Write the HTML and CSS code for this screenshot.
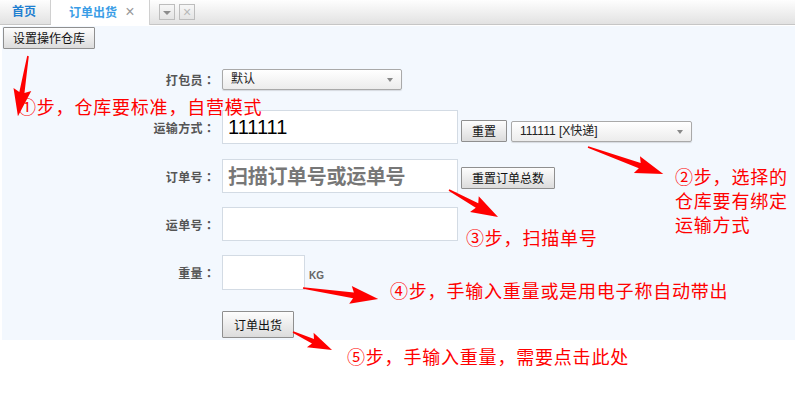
FILE: index.html
```html
<!DOCTYPE html>
<html lang="zh-CN">
<head>
    <meta charset="UTF-8">
    <title>订单出货</title>
    <link rel="stylesheet" href="styles.css">
</head>
<body>

    <!-- вкладки -->
    <div class="tabs">
        <div class="tab">首页</div>
        <div class="tab active">订单出货 <span class="tab-close">×</span></div>
        <div class="tab-tools">
            <span class="tool-btn"><span class="tool-arrow"></span></span>
            <span class="tool-btn tool-x">×</span>
        </div>
    </div>

    <div class="panel">
        <button class="btn">设置操作仓库</button>

        <div class="form">
            <div class="form-row row-pack">
                <label class="form-label">打包员<span class="colon" lang="zh-TW">：</span></label>
                <div class="select select-pack">默认<span class="select-arrow"></span></div>
            </div>

            <div class="form-row row-ship">
                <label class="form-label">运输方式<span class="colon" lang="zh-TW">：</span></label>
                <div class="input input-big">111111</div>
                <div class="row-extra">
                    <button class="btn">重置</button>
                    <div class="select select-ship">111111 [X快递]<span class="select-arrow"></span></div>
                </div>
            </div>

            <div class="form-row row-order">
                <label class="form-label">订单号<span class="colon" lang="zh-TW">：</span></label>
                <div class="input input-big placeholder">扫描订单号或运单号</div>
                <div class="row-extra extra-order">
                    <button class="btn">重置订单总数</button>
                </div>
            </div>

            <div class="form-row">
                <label class="form-label">运单号<span class="colon" lang="zh-TW">：</span></label>
                <div class="input input-big"></div>
            </div>

            <div class="form-row">
                <label class="form-label">重量<span class="colon" lang="zh-TW">：</span></label>
                <div class="input input-weight"></div>
                <span class="unit">KG</span>
            </div>

            <div class="form-row row-submit">
                <span class="form-label"></span>
                <button class="btn btn-submit">订单出货</button>
            </div>
        </div>
    </div>

    <!-- пометки поверх -->
    <svg class="arrows" width="795" height="399" viewBox="0 0 795 399">
        <g fill="#ff0000">
            <g transform="translate(28,56) rotate(99.5)">
                <polygon points="0,-0.8 37,-2.6 34,-9 61,0 34,9 37,2.6 0,0.8"/>
            </g>
            <g transform="translate(588,147) rotate(19.8)">
                <polygon points="0,-0.8 55,-2.8 52,-9 80,0 52,9 55,2.8 0,0.8"/>
            </g>
            <g transform="translate(449,190) rotate(28.9)">
                <polygon points="0,-0.8 32,-2.6 29,-9 56,0 29,9 32,2.6 0,0.8"/>
            </g>
            <g transform="translate(303,288) rotate(8.3)">
                <polygon points="0,-0.8 51,-2.8 48,-9 76,0 48,9 51,2.8 0,0.8"/>
            </g>
            <g transform="translate(293,332) rotate(24.8)">
                <polygon points="0,-0.8 22,-2.4 19,-8 43,0 19,8 22,2.4 0,0.8"/>
            </g>
        </g>
    </svg>

    <div class="note note-1">①步，仓库要标准，自营模式</div>
    <div class="note note-2">②步，选择的<br>仓库要有绑定<br>运输方式</div>
    <div class="note note-3">③步，扫描单号</div>
    <div class="note note-4">④步，手输入重量或是用电子称自动带出</div>
    <div class="note note-5">⑤步，手输入重量，需要点击此处</div>

</body>
</html>
```

FILE: styles.css
```css
/* сброс */
* {
    margin: 0;
    padding: 0;
    box-sizing: border-box;
}

body {
    font-family: "Liberation Sans", "Noto Sans CJK SC", sans-serif;
    font-size: 12px;
    color: #222;
    background: #fff;
    width: 795px;
    height: 399px;
    overflow: hidden;
    position: relative;
}

/* вкладки */
.tabs {
    display: flex;
    align-items: flex-start;
    height: 25px;
    border-bottom: 1px solid #c6c6c6;
    background: linear-gradient(#fefefe, #e2e2e2);
}

.tab {
    height: 24px;
    line-height: 24px;
    width: 51px;
    padding-left: 12px;
    border-right: 1px solid #d0d0d0;
    color: #1f7fd0;
    font-weight: bold;
}

.tab.active {
    width: 99px;
    height: 25px;
    padding-left: 18px;
    background: #fff;
    color: #3a9de6;
}

.tab-close {
    margin-left: 5px;
    color: #999;
    font-weight: normal;
    font-size: 16px;
}

.tab-tools {
    display: flex;
    gap: 4px;
    margin: 4px 0 0 9px;
}

.tool-btn {
    width: 16px;
    height: 16px;
    border: 1px solid #bdbdbd;
    background: linear-gradient(#f7f7f7, #e4e4e4);
    display: flex;
    align-items: center;
    justify-content: center;
}

.tool-arrow {
    width: 0;
    height: 0;
    border-left: 4px solid transparent;
    border-right: 4px solid transparent;
    border-top: 4px solid #8c8c8c;
    margin-top: 2px;
}

.tool-x {
    color: #b8b8b8;
    font-size: 14px;
    line-height: 14px;
}

/* панель */
.panel {
    margin: 1px 0 0 2px;
    padding: 1px 0 3px 1px;
    background: #f3f8fe;
    height: 314px;
}

.btn {
    font-family: "Noto Sans CJK SC", sans-serif;
    font-size: 12px;
    color: #111;
    height: 22px;
    padding: 0 9px;
    line-height: 20px;
    border: 1px solid #8f8f8f;
    border-radius: 1px;
    background: linear-gradient(#fdfdfd, #dcdcdc);
}

/* форма */
.form {
    display: flex;
    flex-direction: column;
}

.form-row {
    display: flex;
    align-items: center;
    margin-top: 14px;
}

.row-pack {
    margin-top: 20px;
}

.row-ship {
    margin-top: 20px;
}

.row-order {
    margin-top: 15px;
}

.row-submit {
    margin-top: 21px;
}

.form-label {
    width: 212px;
    margin-right: 7px;
    text-align: right;
    font-family: "Noto Sans CJK SC", sans-serif;
    font-weight: bold;
    font-size: 12px;
    letter-spacing: 0.4px;
    color: #555;
}

/* двоеточие по центру ячейки, как в оригинале */
.colon {
    font-family: "Noto Sans CJK TC", sans-serif;
    letter-spacing: 0;
}

.select {
    position: relative;
    height: 21px;
    line-height: 19px;
    padding-left: 8px;
    border: 1px solid #a9a9a9;
    border-radius: 2px;
    background: linear-gradient(#fff, #ececec);
    box-shadow: 0 1px 1px rgba(0, 0, 0, 0.12);
    font-family: "Liberation Sans", "Noto Sans CJK SC", sans-serif;
    color: #222;
}

.select-pack {
    width: 180px;
}

.select-ship {
    width: 181px;
    margin-left: 4px;
    margin-top: 1px;
}

.select-arrow {
    position: absolute;
    right: 8px;
    top: 8px;
    border-left: 3px solid transparent;
    border-right: 3px solid transparent;
    border-top: 4px solid #888;
}

.input {
    width: 236px;
    height: 34px;
    border: 1px solid #d3dbe4;
    background: #fff;
}

.input-big {
    padding-left: 5px;
    line-height: 32px;
    font-size: 20px;
    color: #000;
}

.placeholder {
    font-family: "Noto Sans CJK SC", sans-serif;
    font-weight: bold;
    color: #777;
    letter-spacing: -0.3px;
}

.input-weight {
    width: 83px;
    height: 35px;
}

.row-extra {
    display: flex;
    align-self: flex-start;
    margin: 10px 0 0 3px;
}

.row-extra .btn {
    padding: 0 10px;
}

.extra-order {
    margin-top: 8px;
}

.unit {
    align-self: flex-end;
    margin: 0 0 9px 4px;
    font-size: 10px;
    font-weight: bold;
    color: #666;
}

.btn-submit {
    height: 27px;
    width: 72px;
    padding: 0;
}

/* красные пометки */
.arrows {
    position: absolute;
    left: 0;
    top: 0;
    pointer-events: none;
}

.note {
    position: absolute;
    font-family: "Noto Sans CJK SC", sans-serif;
    font-size: 18px;
    line-height: 24px;
    letter-spacing: 0.8px;
    color: #ff0000;
    white-space: nowrap;
}

.note-1 { left: 18px; top: 94px; }
.note-2 { left: 675px; top: 164px; }
.note-3 { left: 466px; top: 225px; }
.note-4 { left: 390px; top: 278px; }
.note-5 { left: 347px; top: 344px; }
```
